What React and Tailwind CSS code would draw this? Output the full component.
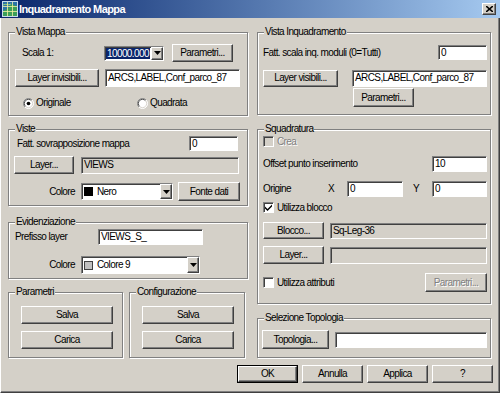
import React from "react";

const raised =
  "bg-[#d4d0c8] border border-t-white border-l-white border-r-[#404040] border-b-[#404040] shadow-[inset_-1px_-1px_0_#808080]";
const sunken =
  "border border-t-[#808080] border-l-[#808080] border-r-white border-b-white shadow-[inset_1px_1px_0_#404040]";

function Btn({ className = "", disabled, children }) {
  return (
    <button
      type="button"
      className={`${raised} shrink-0 flex items-center justify-center leading-none ${
        disabled ? "text-[#808080] [text-shadow:1px_1px_0_#fff]" : "text-black"
      } ${className}`}
    >
      {children}
    </button>
  );
}

function Field({ className = "", grey, children }) {
  return (
    <div
      className={`${sunken} ${grey ? "bg-[#d4d0c8]" : "bg-white"} shrink-0 flex items-center pl-[2px] whitespace-nowrap overflow-hidden ${className}`}
    >
      {children}
    </div>
  );
}

function Arrow() {
  return (
    <svg width="7" height="4" viewBox="0 0 7 4">
      <path d="M0 0h7L3.5 4z" fill="#000" />
    </svg>
  );
}

function Combo({ className = "", children }) {
  return (
    <div className={`${sunken} bg-white shrink-0 flex items-stretch ${className}`}>
      <div className="flex-1 flex items-center pl-[1px] overflow-hidden whitespace-nowrap">{children}</div>
      <div className={`${raised} w-[12px] flex items-center justify-center`}>
        <Arrow />
      </div>
    </div>
  );
}

function Check({ checked, disabled }) {
  return (
    <span
      className={`${sunken} ${disabled ? "bg-[#d4d0c8]" : "bg-white"} w-[11px] h-[11px] shrink-0 flex items-center justify-center`}
    >
      {checked && (
        <svg width="7" height="7" viewBox="0 0 7 7">
          <path d="M0 2.5L2.5 5 7 0.5V2.5L2.5 7 0 4.5z" fill="#000" />
        </svg>
      )}
    </span>
  );
}

function Radio({ checked }) {
  return (
    <svg width="11" height="11" viewBox="0 0 12 12" className="shrink-0">
      <circle cx="6" cy="6" r="5.5" fill="#fff" />
      <path d="M2.1 9.9A5.5 5.5 0 0 1 9.9 2.1" stroke="#808080" fill="none" />
      <path d="M2.8 9.2A4.5 4.5 0 0 1 9.2 2.8" stroke="#404040" fill="none" />
      <path d="M9.9 2.1A5.5 5.5 0 0 1 2.1 9.9" stroke="#fff" fill="none" />
      <path d="M9.2 2.8A4.5 4.5 0 0 1 2.8 9.2" stroke="#d4d0c8" fill="none" />
      {checked && <circle cx="6" cy="6" r="2" fill="#000" />}
    </svg>
  );
}

function Group({ title, className = "", children }) {
  return (
    <div
      className={`relative shrink-0 border border-[#808080] shadow-[1px_1px_0_#fff,inset_1px_1px_0_#fff] ${className}`}
    >
      <span className="absolute left-[6px] -top-[7px] px-[1px] bg-[#d4d0c8] leading-[12px] whitespace-nowrap">
        {title}
      </span>
      {children}
    </div>
  );
}

function TitleBar() {
  return (
    <div className="h-[18px] shrink-0 flex items-center bg-linear-to-r from-[#0a246a] to-[#a6caf0] pl-[2px] pr-[4px]">
      <svg width="16" height="16" viewBox="0 0 16 16" className="shrink-0">
        <rect x="0.5" y="0.5" width="15" height="15" fill="#2b74a8" stroke="#c8dcec" />
        <path d="M1 11C3 7 5 10 7 6S11 3 15 6V15H1Z" fill="#3c9e58" />
        <path d="M1 4C4 2 6 5 9 3" stroke="#9ad07a" fill="none" />
        <path d="M5.5 1v14M10.5 1v14M1 5.5h14M1 10.5h14" stroke="#f4f0a0" strokeWidth="0.8" />
      </svg>
      <span className="ml-[1px] text-white font-bold text-[11px] tracking-[-0.6px]">Inquadramento Mappa</span>
      <div className={`${raised} ml-auto w-[14px] h-[12px] flex items-center justify-center`}>
        <svg width="7" height="6" viewBox="0 0 7 6">
          <path d="M0 0l7 6M7 0L0 6" stroke="#000" strokeWidth="1.6" />
        </svg>
      </div>
    </div>
  );
}

export default function App() {
  return (
    <div className="w-[500px] h-[393px] bg-[#d4d0c8] overflow-hidden flex flex-col font-['Liberation_Sans',Arial,sans-serif] text-[10px] tracking-[-0.6px] leading-[12px] text-black">
      <TitleBar />
      <div className="flex-1 flex flex-col border-l border-l-white border-r border-b border-r-[#404040] border-b-[#404040] shadow-[inset_-1px_-1px_0_#808080]">
        <div className="flex gap-[9px] pl-[7px] pt-[14px]">
          {/* left column */}
          <div className="w-[240px] flex flex-col">
            <Group title="Vista Mappa" className="h-[84px]">
              <div className="mt-[11px] h-[18px] flex items-center pl-[13px]">
                <span className="w-[82px]">Scala 1:</span>
                <Combo className="w-[60px] h-[15px]">
                  <span className="bg-[#0a246a] text-white px-[1px] leading-[11px]">10000.000</span>
                </Combo>
                <Btn className="ml-[8px] w-[61px] h-[18px]">Parametri...</Btn>
              </div>
              <div className="mt-[7px] h-[18px] flex items-center pl-[6px]">
                <Btn className="w-[84px] h-[18px]">Layer invisibili...</Btn>
                <Field className="ml-[6px] w-[135px] h-[18px]">ARCS,LABEL,Conf_parco_87</Field>
              </div>
              <div className="mt-[10px] h-[12px] flex items-center pl-[14px]">
                <div className="w-[114px] flex items-center gap-[2px]">
                  <Radio checked />
                  <span>Originale</span>
                </div>
                <div className="flex items-center gap-[2px]">
                  <Radio />
                  <span>Quadrata</span>
                </div>
              </div>
            </Group>

            <Group title="Viste" className="mt-[13px] h-[77px]">
              <div className="mt-[6px] h-[15px] flex items-center pl-[8px] pr-[9px]">
                <span className="flex-1">Fatt. sovrapposizione mappa</span>
                <Field className="w-[49px] h-[15px]">0</Field>
              </div>
              <div className="mt-[5px] h-[18px] flex items-center pl-[5px]">
                <Btn className="w-[60px] h-[18px]">Layer...</Btn>
                <Field grey className="ml-[7px] w-[158px] h-[17px]">VIEWS</Field>
              </div>
              <div className="mt-[8px] h-[19px] flex items-center pl-[5px]">
                <span className="w-[61px] text-right">Colore</span>
                <Combo className="ml-[6px] w-[92px] h-[17px]">
                  <span className="w-[9px] h-[9px] bg-black ml-[1px] mr-[4px] shrink-0" />
                  <span>Nero</span>
                </Combo>
                <Btn className="ml-[5px] w-[62px] h-[19px]">Fonte dati</Btn>
              </div>
            </Group>

            <Group title="Evidenziazione" className="mt-[16px] h-[57px]">
              <div className="mt-[6px] h-[16px] flex items-center pl-[6px]">
                <span className="w-[83px]">Prefisso layer</span>
                <Field className="w-[105px] h-[16px]">VIEWS_S_</Field>
              </div>
              <div className="mt-[11px] h-[18px] flex items-center pl-[5px]">
                <span className="w-[61px] text-right">Colore</span>
                <Combo className="ml-[6px] w-[119px] h-[18px]">
                  <span className="w-[9px] h-[9px] bg-[#c0c0c0] border border-[#404040] ml-[1px] mr-[4px] shrink-0" />
                  <span>Colore 9</span>
                </Combo>
              </div>
            </Group>

            <div className="mt-[13px] flex gap-[6px]">
              <Group title="Parametri" className="w-[115px] h-[66px]">
                <div className="mt-[13px] pl-[12px] flex flex-col gap-[7px]">
                  <Btn className="w-[92px] h-[18px]">Salva</Btn>
                  <Btn className="w-[92px] h-[18px]">Carica</Btn>
                </div>
              </Group>
              <Group title="Configurazione" className="w-[116px] h-[66px]">
                <div className="mt-[13px] pl-[12px] flex flex-col gap-[7px]">
                  <Btn className="w-[92px] h-[18px]">Salva</Btn>
                  <Btn className="w-[92px] h-[18px]">Carica</Btn>
                </div>
              </Group>
            </div>
          </div>

          {/* right column */}
          <div className="w-[234px] flex flex-col">
            <Group title="Vista Inquadramento" className="h-[83px]">
              <div className="mt-[12px] h-[15px] flex items-center pl-[5px] pr-[3px]">
                <span className="flex-1">Fatt. scala inq. moduli (0=Tutti)</span>
                <Field className="w-[49px] h-[15px]">0</Field>
              </div>
              <div className="mt-[9px] h-[18px] flex items-center pl-[5px]">
                <Btn className="w-[75px] h-[17px]">Layer visibili...</Btn>
                <Field className="ml-[14px] w-[135px] h-[17px]">ARCS,LABEL,Conf_parco_87</Field>
              </div>
              <div className="mt-[1px] pl-[95px]">
                <Btn className="w-[61px] h-[19px]">Parametri...</Btn>
              </div>
            </Group>

            <Group title="Squadratura" className="mt-[14px] h-[175px]">
              <div className="mt-[6px] h-[11px] flex items-center pl-[5px]">
                <Check disabled />
                <span className="ml-[3px] text-[#808080] [text-shadow:1px_1px_0_#fff]">Crea</span>
              </div>
              <div className="mt-[9px] h-[16px] flex items-center pl-[5px] pr-[3px]">
                <span className="flex-1">Offset punto inserimento</span>
                <Field className="w-[55px] h-[16px]">10</Field>
              </div>
              <div className="mt-[9px] h-[16px] flex items-center pl-[5px]">
                <span className="w-[65px]">Origine</span>
                <span className="w-[19px]">X</span>
                <Field className="w-[56px] h-[16px]">0</Field>
                <span className="ml-[10px] w-[19px]">Y</span>
                <Field className="w-[55px] h-[16px]">0</Field>
              </div>
              <div className="mt-[5px] h-[11px] flex items-center pl-[5px]">
                <Check checked />
                <span className="ml-[3px]">Utilizza blocco</span>
              </div>
              <div className="mt-[9px] h-[17px] flex items-center pl-[5px]">
                <Btn className="w-[61px] h-[17px]">Blocco...</Btn>
                <Field grey className="ml-[6px] w-[157px] h-[16px]">Sq-Leg-36</Field>
              </div>
              <div className="mt-[7px] h-[18px] flex items-center pl-[5px]">
                <Btn className="w-[61px] h-[18px]">Layer...</Btn>
                <Field grey className="ml-[6px] w-[157px] h-[17px]" />
              </div>
              <div className="mt-[9px] h-[19px] flex items-center pl-[5px] pr-[3px]">
                <Check />
                <span className="ml-[3px]">Utilizza attributi</span>
                <Btn disabled className="ml-auto w-[62px] h-[19px]">Parametri...</Btn>
              </div>
            </Group>

            <Group title="Selezione Topologia" className="mt-[14px] h-[40px]">
              <div className="mt-[11px] h-[19px] flex items-center pl-[4px]">
                <Btn className="w-[67px] h-[19px]">Topologia...</Btn>
                <Field className="ml-[6px] w-[152px] h-[16px]" />
              </div>
            </Group>
          </div>
        </div>

        <div className="mt-[7px] flex justify-end gap-[4px] pr-[6px]">
          <div className="w-[61px] h-[18px] border border-black flex">
            <Btn className="w-full h-full">OK</Btn>
          </div>
          <Btn className="w-[61px] h-[18px]">Annulla</Btn>
          <Btn className="w-[61px] h-[18px]">Applica</Btn>
          <Btn className="w-[61px] h-[18px]">?</Btn>
        </div>
      </div>
    </div>
  );
}
